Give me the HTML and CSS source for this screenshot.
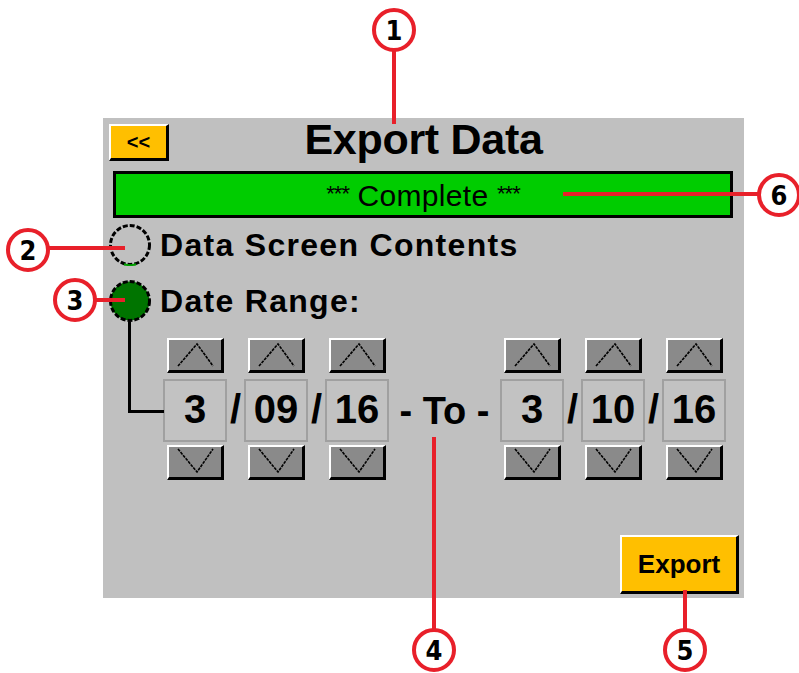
FILE: index.html
```html
<!DOCTYPE html>
<html lang="en">
<head>
  <meta charset="UTF-8">
  <title>Export Data</title>
  <meta name="viewport" content="width=device-width, initial-scale=1.0">
  <link rel="stylesheet" href="styles.css">
</head>
<body>
<div class="stage">

  <div class="panel">
    <div class="header">
      <button class="bevel back">&lt;&lt;</button>
      <h1 class="title">Export Data</h1>
    </div>

    <div class="status"><span class="stars">***</span> Complete <span class="stars">***</span></div>

    <div class="option">
      <svg class="radio" width="42" height="42" viewBox="0 0 42 42">
        <circle cx="21" cy="21" r="19.5" fill="#c0c0c0" stroke="#000" stroke-width="3" stroke-dasharray="5 2"/>
        <path d="M15 40.2 A19.5 19.5 0 0 0 27 40.2" fill="none" stroke="#00a000" stroke-width="2"/>
      </svg>
      <span class="label">Data Screen Contents</span>
    </div>

    <div class="option second">
      <svg class="radio" width="42" height="42" viewBox="0 0 42 42">
        <circle cx="21" cy="21" r="19.5" fill="#007400" stroke="#000" stroke-width="3" stroke-dasharray="5 2"/>
      </svg>
      <span class="label">Date Range:</span>
    </div>

    <div class="range">
      <div class="date">
        <div class="field">
          <button class="bevel step"><svg width="57" height="35"><polyline points="11,28 30,6 46,28" class="chev"/></svg></button>
          <div class="box">3</div>
          <button class="bevel step"><svg width="57" height="35"><polyline points="11,4 30,27 46,4" class="chev"/></svg></button>
        </div>
        <span class="slash">/</span>
        <div class="field">
          <button class="bevel step"><svg width="57" height="35"><polyline points="11,28 30,6 46,28" class="chev"/></svg></button>
          <div class="box">09</div>
          <button class="bevel step"><svg width="57" height="35"><polyline points="11,4 30,27 46,4" class="chev"/></svg></button>
        </div>
        <span class="slash">/</span>
        <div class="field">
          <button class="bevel step"><svg width="57" height="35"><polyline points="11,28 30,6 46,28" class="chev"/></svg></button>
          <div class="box">16</div>
          <button class="bevel step"><svg width="57" height="35"><polyline points="11,4 30,27 46,4" class="chev"/></svg></button>
        </div>
      </div>

      <span class="to">- To -</span>

      <div class="date">
        <div class="field">
          <button class="bevel step"><svg width="57" height="35"><polyline points="11,28 30,6 46,28" class="chev"/></svg></button>
          <div class="box">3</div>
          <button class="bevel step"><svg width="57" height="35"><polyline points="11,4 30,27 46,4" class="chev"/></svg></button>
        </div>
        <span class="slash">/</span>
        <div class="field">
          <button class="bevel step"><svg width="57" height="35"><polyline points="11,28 30,6 46,28" class="chev"/></svg></button>
          <div class="box">10</div>
          <button class="bevel step"><svg width="57" height="35"><polyline points="11,4 30,27 46,4" class="chev"/></svg></button>
        </div>
        <span class="slash">/</span>
        <div class="field">
          <button class="bevel step"><svg width="57" height="35"><polyline points="11,28 30,6 46,28" class="chev"/></svg></button>
          <div class="box">16</div>
          <button class="bevel step"><svg width="57" height="35"><polyline points="11,4 30,27 46,4" class="chev"/></svg></button>
        </div>
      </div>
    </div>

    <div class="footer">
      <button class="bevel export">Export</button>
    </div>
  </div>

  <!-- numbered callouts -->
  <svg class="callouts" width="799" height="673" viewBox="0 0 799 673">
    <g class="lead">
      <line x1="394" y1="50" x2="394" y2="124"/>
      <line x1="48" y1="248" x2="125" y2="248"/>
      <line x1="95" y1="300" x2="125" y2="300"/>
      <line x1="434" y1="437" x2="434" y2="630"/>
      <line x1="685" y1="590" x2="685" y2="630"/>
      <line x1="563" y1="194" x2="760" y2="194"/>
    </g>
    <g class="mark">
      <circle cx="394" cy="30" r="20"/><text x="394" y="40">1</text>
      <circle cx="28" cy="250" r="20"/><text x="28" y="260">2</text>
      <circle cx="75" cy="300" r="20"/><text x="75" y="310">3</text>
      <circle cx="434" cy="650" r="20"/><text x="434" y="660">4</text>
      <circle cx="685" cy="650" r="20"/><text x="685" y="660">5</text>
      <circle cx="779" cy="195" r="20"/><text x="779" y="205">6</text>
    </g>
  </svg>

</div>
</body>
</html>
```

FILE: styles.css
```css
body {
  margin: 0;
  background: #fff;
  font-family: "Liberation Sans", Arial, sans-serif;
  color: #000;
}
.stage {
  position: relative;
  width: 799px;
  height: 673px;
  overflow: hidden;
}
.panel {
  margin: 118px 0 0 103px;
  width: 641px;
  height: 480px;
  background: #c0c0c0;
  display: flex;
  flex-direction: column;
}

.bevel {
  box-sizing: border-box;
  padding: 0;
  font-family: inherit;
  border-style: solid;
  border-color: #fff #000 #000 #fff;
  border-width: 2px 3px 3px 2px;
  cursor: pointer;
}

.header {
  display: grid;
  grid-template-columns: 66px 1fr 66px;
  align-items: start;
  height: 53px;
  padding-top: 3px;
  box-sizing: border-box;
}
.back {
  margin: 3px 0 0 6px;
  width: 60px;
  height: 37px;
  background: #ffbf00;
  font-size: 20px;
  font-weight: bold;
}
.title {
  margin: 0;
  text-align: center;
  font-size: 43px;
  line-height: 36px;
  font-weight: bold;
  letter-spacing: -0.3px;
}

.status {
  box-sizing: border-box;
  margin-left: 10px;
  width: 620px;
  height: 47px;
  background: #00cc00;
  border: 3px solid #000;
  text-align: center;
  font-size: 30px;
  line-height: 40px;
  letter-spacing: 0.3px;
}
.stars {
  font-size: 22px;
  vertical-align: 5px;
  letter-spacing: -1px;
}

.option {
  display: flex;
  align-items: center;
  gap: 9px;
  height: 42px;
  margin: 6px 0 0 6px;
}
.option.second { margin-top: 14px; }
.radio { display: block; }
.label {
  font-size: 32px;
  font-weight: bold;
  letter-spacing: 1.3px;
}

.range {
  position: relative;
  display: flex;
  align-items: center;
  margin-top: 16px;
  padding-left: 60px;
}
.range::before {
  content: "";
  position: absolute;
  left: 25px;
  top: -16px;
  width: 33px;
  height: 88px;
  border-left: 3px solid #000;
  border-bottom: 3px solid #000;
}
.date {
  display: flex;
  align-items: center;
}
.field {
  width: 64px;
  display: flex;
  flex-direction: column;
  align-items: center;
}
.step {
  width: 57px;
  height: 35px;
  background: #8a8a8a;
  position: relative;
}
.step svg {
  position: absolute;
  left: -2px;
  top: -2px;
}
.chev {
  fill: none;
  stroke: #000;
  stroke-width: 1.6;
  stroke-dasharray: 3 1;
}
.box {
  box-sizing: border-box;
  width: 64px;
  height: 63px;
  margin: 6px 0 3px;
  border: 2px solid #a0a0a0;
  background: #c2c2c2;
  text-align: center;
  font-size: 40px;
  font-weight: bold;
  line-height: 56px;
}
.slash {
  width: 17px;
  text-align: center;
  font-size: 40px;
  font-weight: bold;
}
.to {
  width: 111px;
  text-align: center;
  font-size: 38px;
  font-weight: bold;
  padding-top: 4px;
}

.footer {
  display: flex;
  justify-content: flex-end;
  margin-top: 55px;
  padding-right: 5px;
}
.export {
  width: 119px;
  height: 59px;
  background: #ffbf00;
  font-size: 26px;
  font-weight: bold;
}

.callouts {
  position: absolute;
  left: 0;
  top: 0;
}
.lead line {
  stroke: #e8202a;
  stroke-width: 4;
}
.mark circle {
  fill: #fff;
  stroke: #e8202a;
  stroke-width: 4;
}
.mark text {
  text-anchor: middle;
  font-family: "DejaVu Sans Condensed", "DejaVu Sans", sans-serif;
  font-weight: bold;
  font-size: 27px;
  fill: #000;
}
```
